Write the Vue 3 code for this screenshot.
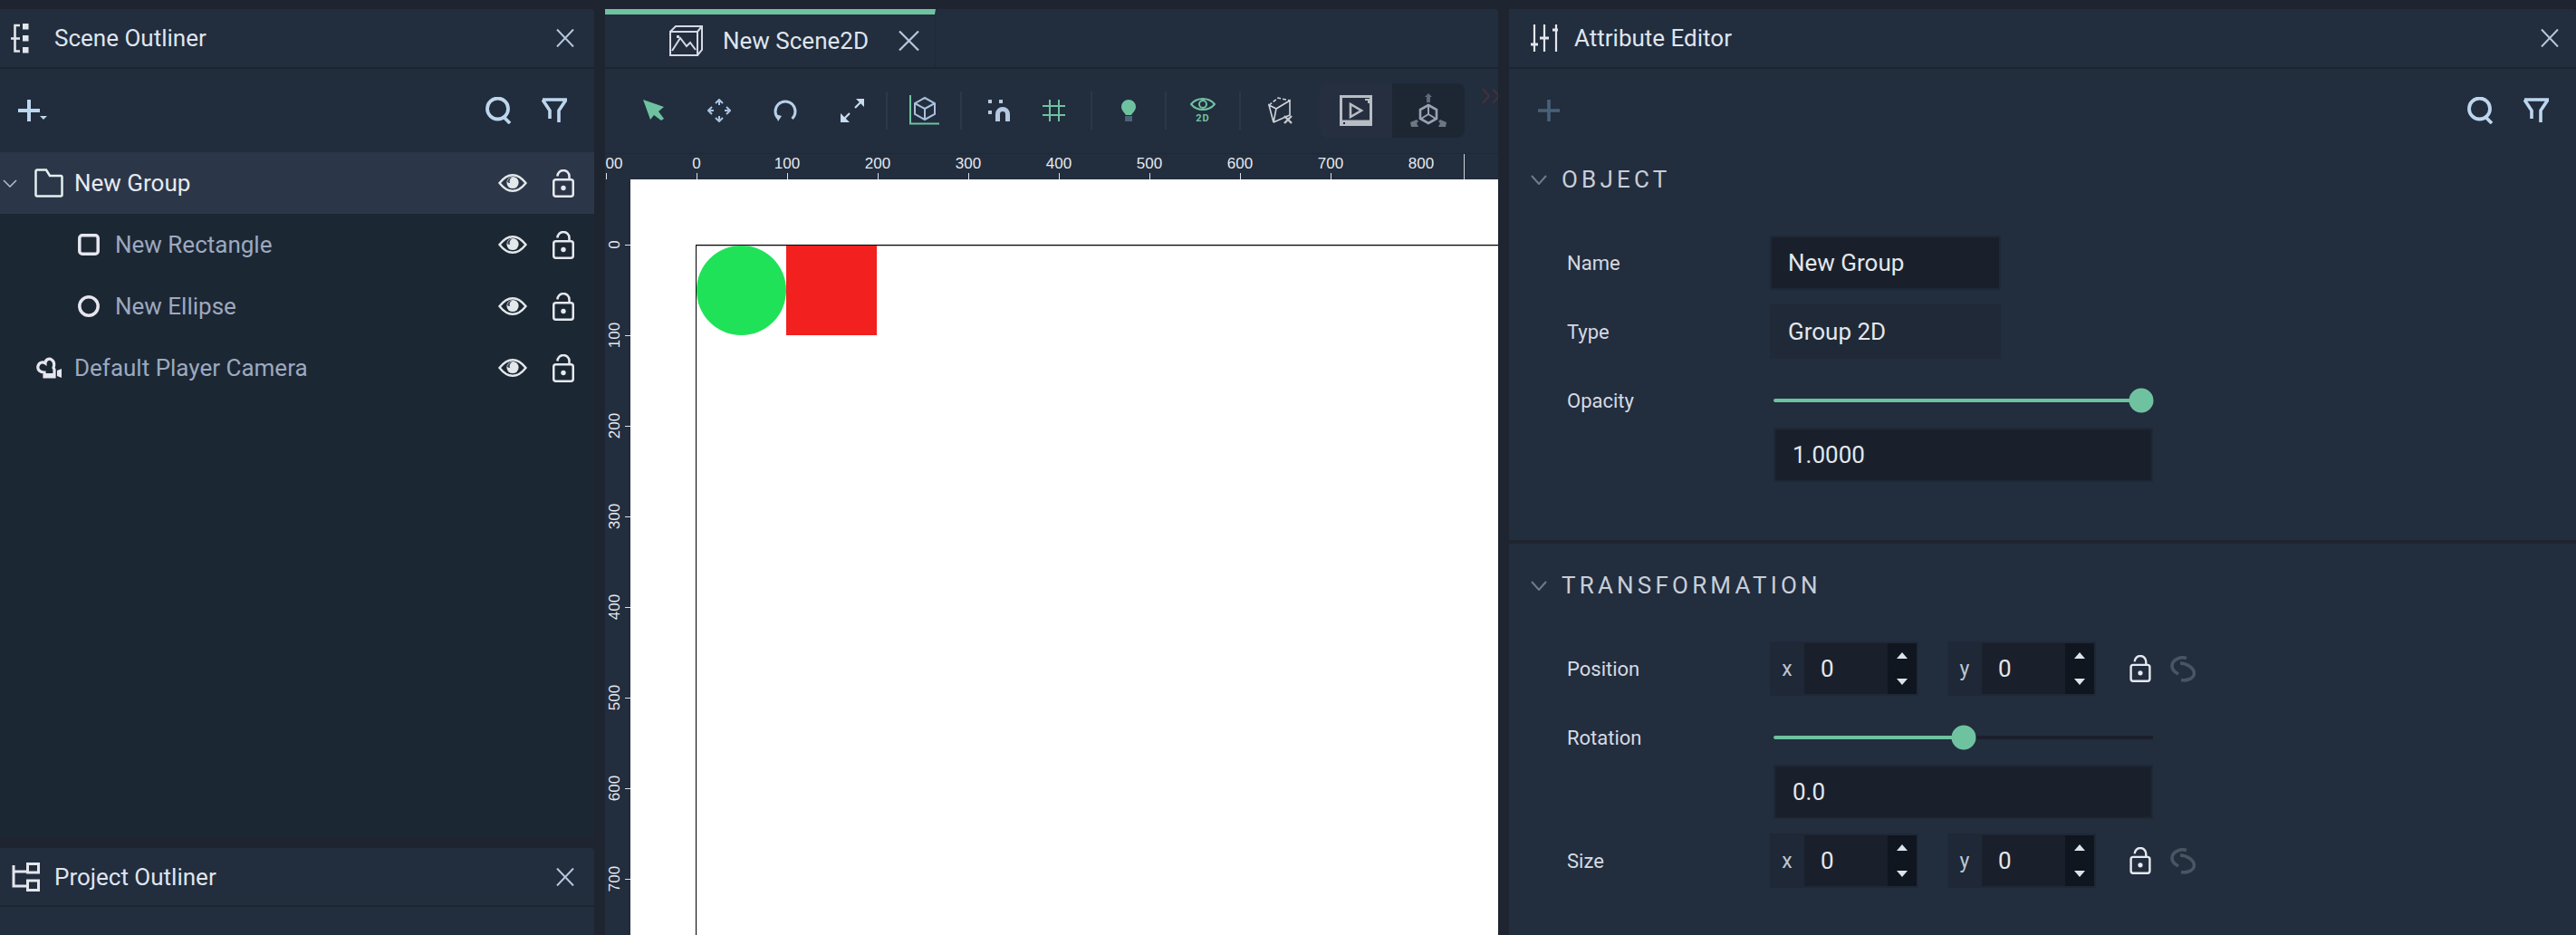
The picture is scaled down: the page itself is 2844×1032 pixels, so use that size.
<template>
  <svg class="defs" aria-hidden="true">
    <symbol id="i-close" viewBox="0 0 20 20">
      <path d="M1 0.5 L19 19.5 M19 0.5 L1 19.5" fill="none" stroke="currentColor" stroke-width="2" />
    </symbol>
    <symbol id="i-eye" viewBox="0 0 32 20">
      <path d="M1.5 10 C7 3 12 1.2 16 1.2 S25 3 30.5 10 C25 17 20 18.8 16 18.8 S7 17 1.5 10 Z" fill="none" stroke="currentColor" stroke-width="2.4" />
      <circle cx="16" cy="9.5" r="6.6" fill="currentColor" />
      <path d="M10 9 A6 6 0 0 1 16 3.4 A5 5 0 0 0 13 10 A6 6 0 0 1 10 9 Z" fill="#3a4658" />
    </symbol>
    <symbol id="i-lock" viewBox="0 0 24 31">
      <rect x="1.25" y="11.25" width="21.5" height="18.5" rx="2.5" fill="none" stroke="currentColor" stroke-width="2.5" />
      <path d="M5.5 7.5 A6.5 6.5 0 0 1 18.5 7.5 V11" fill="none" stroke="currentColor" stroke-width="2.5" />
      <circle cx="12" cy="20.5" r="2.7" fill="currentColor" />
    </symbol>
    <symbol id="i-search" viewBox="0 0 30 30">
      <circle cx="14.5" cy="13" r="11.5" fill="none" stroke="currentColor" stroke-width="3.8" />
      <path d="M21 22 L28 29" fill="none" stroke="currentColor" stroke-width="3.8" />
    </symbol>
    <symbol id="i-filter" viewBox="0 0 28 28">
      <path d="M1 2 H27 L19 14 V27 M1 2 L9 14 V23" fill="none" stroke="currentColor" stroke-width="3.6" />
    </symbol>
    <symbol id="i-link" viewBox="0 0 28 29">
      <path d="M18 2.5 C10 0 2 5 2 11 C2 15 5 18 9 20 M11 8 C18 8 26 13 26.5 19 C26.5 24 20 28 12 26.5" fill="none" stroke="currentColor" stroke-width="3.6" />
    </symbol>
    <symbol id="i-folder" viewBox="0 0 32 32">
      <path d="M1.5 3 A1.5 1.5 0 0 1 3 1.5 H13 L17 8 H29 A1.5 1.5 0 0 1 30.5 9.5 V29 A1.5 1.5 0 0 1 29 30.5 H3 A1.5 1.5 0 0 1 1.5 29 Z" fill="none" stroke="currentColor" stroke-width="2.5" />
    </symbol>
    <symbol id="i-rect" viewBox="0 0 24 24">
      <rect x="1.8" y="1.8" width="20.4" height="20.4" rx="3" fill="none" stroke="currentColor" stroke-width="3.5" />
    </symbol>
    <symbol id="i-ellipse" viewBox="0 0 24 24">
      <circle cx="12" cy="12" r="10.2" fill="none" stroke="currentColor" stroke-width="3.5" />
    </symbol>
    <symbol id="i-camera" viewBox="0 0 28 24">
      <path d="M9 22 V17 C4 17 1 14 2 10 C3 6 7 5 10 7 C10 3 14 1 17 3 C20 5 20 9 19 12 L20 14 V22 Z" fill="none" stroke="currentColor" stroke-width="3.2" />
      <path d="M9 18 H20 V23 H9 Z" fill="currentColor" />
      <path d="M23 15 L28 13 V23 L23 21 Z" fill="currentColor" />
    </symbol>
  </svg>

  <div class="app">
    <div class="column">
      <header class="panel-head">
        <svg class="icon-tree" width="20" height="33" viewBox="0 0 20 33">
          <path d="M10 2 H4.5 V30.5 H10 M0 16.5 H10" fill="none" stroke="currentColor" stroke-width="2.6" />
          <path d="M13 0 h6.5 v6.5 h-6.5z M13 13 h6.5 v6.5 h-6.5z M13 26 h6.5 v6.5 h-6.5z" fill="currentColor" />
        </svg>
        <span class="title">Scene Outliner</span>
        <svg class="close"><use href="#i-close" /></svg>
      </header>
      <section class="tree-panel">
        <div class="tools-row">
          <svg class="add-icon" width="32" height="24" viewBox="0 0 32 24">
            <path d="M12 0 V24 M0 12 H24" fill="none" stroke="currentColor" stroke-width="4" />
            <path d="M24 18 H32 L28 22 Z" fill="currentColor" />
          </svg>
          <svg class="tool-search"><use href="#i-search" /></svg>
          <svg class="tool-filter"><use href="#i-filter" /></svg>
        </div>
        <div class="tree">
          <div
            v-for="row in sceneRows"
            :key="row.name"
            class="tree-row"
            :class="{ active: row.active, child: row.child }"
          >
            <span class="caret-slot">
              <svg v-if="row.active" width="16" height="9" viewBox="0 0 16 9">
                <path d="M1 1 L8 8 L15 1" fill="none" stroke="#aeb8c6" stroke-width="1.6" />
              </svg>
            </span>
            <span class="type-slot">
              <svg class="type-icon" :class="'type-' + row.icon"><use :href="'#i-' + row.icon" /></svg>
            </span>
            <span class="row-name">{{ row.name }}</span>
            <svg class="eye"><use href="#i-eye" /></svg>
            <svg class="row-lock"><use href="#i-lock" /></svg>
          </div>
        </div>
      </section>
      <header class="panel-head project-head">
        <svg class="icon-project" width="31" height="32" viewBox="0 0 31 32">
          <path d="M2 3 V26 H16 M2 10 H16 M17.5 1.5 H29.5 V11 H17.5 Z M17.5 20 H29.5 V30.5 H17.5 Z" fill="none" stroke="currentColor" stroke-width="3" />
        </svg>
        <span class="title">Project Outliner</span>
        <svg class="close"><use href="#i-close" /></svg>
      </header>
      <section class="project-body"></section>
    </div>

    <div class="column">
      <div class="tab-bar">
        <div class="tab">
          <svg class="tab-icon" width="37" height="34" viewBox="0 0 37 34">
            <path d="M1 7 H31 V33 H1 Z M1 7 L7 1 H36 L31 7 M36 1 V27 L31 33 M3 28 L12 14 L19 23 L23 19 L29 27" fill="none" stroke="currentColor" stroke-width="2" />
            <rect x="8" y="11" width="3" height="3" fill="currentColor" />
          </svg>
          <span class="title">New Scene2D</span>
          <svg class="tab-close" width="23" height="22" viewBox="0 0 23 22">
            <path d="M1 0.5 L22 21.5 M22 0.5 L1 21.5" fill="none" stroke="currentColor" stroke-width="2.2" />
          </svg>
        </div>
      </div>
      <div class="toolbar">
        <div class="tool-group first">
          <svg width="23" height="23" viewBox="0 0 23 23">
            <path d="M0 0 L23 8 L17 13 L23 21 L20 23 L12 17 L8 22 Z" fill="#6fc2a0" />
          </svg>
          <svg width="26" height="26" viewBox="0 0 26 26">
            <path d="M9 5 L13 1 L17 5 M13 1 V7 M21 9 L25 13 L21 17 M25 13 H19 M9 21 L13 25 L17 21 M13 25 V19 M5 9 L1 13 L5 17 M1 13 H7" fill="none" stroke="#a9c3e0" stroke-width="2" />
          </svg>
          <svg width="26" height="24" viewBox="0 0 26 24">
            <path d="M5.5 21 A11 11 0 1 1 20.5 21" fill="none" stroke="#b8cfe8" stroke-width="3" />
            <path d="M2 16 L9 18 L5 24 Z" fill="#b8cfe8" />
          </svg>
          <svg width="26" height="26" viewBox="0 0 26 26">
            <path d="M17 0 H26 V9 Z M0 26 V16 L10 26 Z" fill="#c8dcf0" />
            <path d="M22 4 L16 10 M4 22 L10 16" fill="none" stroke="#c8dcf0" stroke-width="2.2" />
          </svg>
        </div>
        <div class="tool-group wide-82">
          <svg width="35" height="35" viewBox="0 0 35 35">
            <path d="M2 1 V32.5 H34" fill="none" stroke="#6fc2a0" stroke-width="2" />
            <path d="M18 4 L29 10 V22 L18 28 L7 22 V10 Z M7 10 L18 16 L29 10 M18 16 V28" fill="none" stroke="#a9c0dc" stroke-width="2" />
          </svg>
        </div>
        <div class="tool-group snap">
          <svg width="24" height="24" viewBox="0 0 24 24">
            <path d="M0 0 h4 v4 h-4z M12 0 h4 v4 h-4z M0 12 h4 v4 h-4z" fill="#b4c8e0" />
            <path d="M10.5 24 V16 A5.5 5.5 0 0 1 21.5 16 V24" fill="none" stroke="#b4c8e0" stroke-width="5" />
          </svg>
          <svg width="25" height="24" viewBox="0 0 25 24">
            <path d="M8 0 V24 M18 0 V24 M0 7 H25 M0 17 H25" fill="none" stroke="#6fc2a0" stroke-width="2" />
          </svg>
        </div>
        <div class="tool-group wide-82">
          <svg width="16" height="24" viewBox="0 0 16 24">
            <path d="M8 0 A8 8 0 0 1 16 8 C16 12 12 15 11 17 H5 C4 15 0 12 0 8 A8 8 0 0 1 8 0 Z" fill="#6fc2a0" />
            <rect x="4" y="18" width="8" height="6" fill="#4d6478" />
          </svg>
        </div>
        <div class="tool-group wide-82 eye-2d">
          <svg width="28" height="14" viewBox="0 0 28 14">
            <path d="M1 7 C6 1 11 1 14 1 S22 1 27 7 C22 13 17 13 14 13 S6 13 1 7 Z" fill="none" stroke="#6fc2a0" stroke-width="2" />
            <circle cx="14" cy="7" r="4" fill="none" stroke="#6fc2a0" stroke-width="2" />
          </svg>
          <span>2D</span>
        </div>
        <div class="tool-group cube-x">
          <svg width="27" height="30" viewBox="0 0 27 30">
            <path d="M1 9 L6 28 L9 13 Z M9 13 L24 4 V20 L6 28" fill="none" stroke="#d0d4da" stroke-width="1.6" />
            <path d="M1 9 L11 1 L24 4" fill="none" stroke="#d0d4da" stroke-width="1.6" stroke-dasharray="4 2" />
            <path d="M18 21 L26 29 M26 21 L18 29" fill="none" stroke="#c4c9d0" stroke-width="2.4" />
          </svg>
        </div>
        <div class="view-switch">
          <div class="view-cell">
            <svg width="36" height="34" viewBox="0 0 36 34">
              <path d="M1.5 1.5 H34.5 V29 H1.5 Z" fill="none" stroke="#b8bcc4" stroke-width="3" />
              <rect x="0" y="28" width="36" height="6" fill="#b8bcc4" />
              <rect x="4" y="30" width="2" height="2" fill="#1d2734" />
              <path d="M12 10 V24 L24 17 Z" fill="none" stroke="#b8bcc4" stroke-width="2.6" />
              <path d="M28 4 H33 V9 H31 V6 H28 Z" fill="#b8bcc4" />
            </svg>
          </div>
          <div class="view-cell dark">
            <svg width="40" height="38" viewBox="0 0 40 38">
              <path d="M20 23 L20 14 M20 23 L12 28 M20 23 L28 28" fill="none" stroke="#98a2b2" stroke-width="2" />
              <path d="M20 13 L29 18 V28 L20 33 L11 28 V18 Z" fill="none" stroke="#98a2b2" stroke-width="2.6" />
              <path d="M16 4 L20 0 L24 4 H22 V10 H18 V4 Z" fill="#5e6a7a" />
              <path d="M0 32 L7 29 L9 31 L7 33 L9 37 H1 Z M40 32 L33 29 L31 31 L33 33 L31 37 H39 Z" fill="#6d7682" />
            </svg>
          </div>
        </div>
        <svg class="more" width="24" height="16" viewBox="0 0 24 16">
          <path d="M1 0 L8 8 L1 16 M12 0 L19 8 L12 16" fill="none" stroke="#43303a" stroke-width="2.4" />
        </svg>
      </div>
      <div class="ruler-top">
        <span class="mark-label mark-clipped">00</span>
        <i class="mark-tick" style="left: 1px"></i>
        <template v-for="mark in topMarks" :key="mark.value">
          <span class="mark-label" :style="{ left: mark.pos + 'px' }">{{ mark.value }}</span>
          <i v-if="mark.value !== 800" class="mark-tick" :style="{ left: mark.pos + 'px' }"></i>
        </template>
        <i class="ruler-end"></i>
      </div>
      <div class="viewport">
        <div class="ruler-left">
          <template v-for="mark in leftMarks" :key="mark.value">
            <span class="mark-label-v" :style="{ top: mark.pos + 'px' }">{{ mark.value }}</span>
            <i class="mark-tick-v" :style="{ top: mark.pos + 'px' }"></i>
          </template>
        </div>
        <div class="canvas">
          <div class="scene-frame">
            <div class="shape-ellipse"></div>
            <div class="shape-rect"></div>
          </div>
        </div>
      </div>
    </div>

    <div class="column">
      <header class="panel-head attr-head">
        <svg width="30" height="30" viewBox="0 0 30 30">
          <path d="M4 0 V30 M15 0 V30 M28 0 V30" fill="none" stroke="currentColor" stroke-width="2.2" />
          <path d="M0 22 H8 M10 15 H20 M24 6 H30" fill="none" stroke="currentColor" stroke-width="3" />
        </svg>
        <span class="title title-attr">Attribute Editor</span>
        <svg class="close"><use href="#i-close" /></svg>
      </header>
      <section class="attr-body">
        <div class="tools-row attr-tools">
          <svg width="24" height="24" viewBox="0 0 24 24">
            <path d="M12 0 V24 M0 12 H24" fill="none" stroke="#4a6178" stroke-width="3.6" />
          </svg>
          <svg class="tool-search"><use href="#i-search" /></svg>
          <svg class="tool-filter"><use href="#i-filter" /></svg>
        </div>

        <div class="section section-object">
          <div class="section-head">
            <svg width="18" height="11" viewBox="0 0 18 11">
              <path d="M1 1 L9 10 L17 1" fill="none" stroke="#6f7b8c" stroke-width="2" />
            </svg>
            <span>OBJECT</span>
          </div>
          <div class="field-row">
            <span class="field-label">Name</span>
            <div class="text-field">New Group</div>
          </div>
          <div class="field-row">
            <span class="field-label">Type</span>
            <div class="text-field readonly">Group 2D</div>
          </div>
          <div class="field-row flush">
            <span class="field-label">Opacity</span>
            <div class="slider">
              <div class="slider-fill" :style="{ width: knobPos(1) + 'px' }"></div>
              <div class="slider-knob" :style="{ left: knobPos(1) + 'px' }"></div>
            </div>
          </div>
          <div class="wide-field">1.0000</div>
        </div>

        <div class="section section-transform">
          <div class="section-head">
            <svg width="18" height="11" viewBox="0 0 18 11">
              <path d="M1 1 L9 10 L17 1" fill="none" stroke="#6f7b8c" stroke-width="2" />
            </svg>
            <span>TRANSFORMATION</span>
          </div>
          <div class="field-row">
            <span class="field-label">Position</span>
            <div v-for="axis in axes" :key="axis" class="spin-field">
              <span class="axis">{{ axis }}</span>
              <span class="spin-value">0</span>
              <span class="spin-arrows"><i class="up"></i><i class="down"></i></span>
            </div>
            <svg class="field-lock"><use href="#i-lock" /></svg>
            <svg class="field-link"><use href="#i-link" /></svg>
          </div>
          <div class="field-row flush">
            <span class="field-label">Rotation</span>
            <div class="slider">
              <div class="slider-fill" :style="{ width: knobPos(0.5) + 'px' }"></div>
              <div class="slider-knob" :style="{ left: knobPos(0.5) + 'px' }"></div>
            </div>
          </div>
          <div class="wide-field spaced">0.0</div>
          <div class="field-row">
            <span class="field-label">Size</span>
            <div v-for="axis in axes" :key="axis" class="spin-field">
              <span class="axis">{{ axis }}</span>
              <span class="spin-value">0</span>
              <span class="spin-arrows"><i class="up"></i><i class="down"></i></span>
            </div>
            <svg class="field-lock"><use href="#i-lock" /></svg>
            <svg class="field-link"><use href="#i-link" /></svg>
          </div>
        </div>
      </section>
    </div>
  </div>
</template>

<script setup>
const sceneRows = [
  { name: "New Group", icon: "folder", active: true },
  { name: "New Rectangle", icon: "rect", child: true },
  { name: "New Ellipse", icon: "ellipse", child: true },
  { name: "Default Player Camera", icon: "camera" },
];

const axes = ["x", "y"];

// ruler marks, px from the left / top edge of each ruler
const topMarks = [0, 100, 200, 300, 400, 500, 600, 700, 800].map((value) => ({
  value,
  pos: 101 + value,
}));
const leftMarks = [0, 100, 200, 300, 400, 500, 600, 700].map((value) => ({
  value,
  pos: 72 + value,
}));

function knobPos(ratio) {
  return 13 + ratio * 393;
}
</script>

<style>
html,
body {
  margin: 0;
  background: #1e2530;
}
</style>

<style scoped>
.defs {
  position: absolute;
  width: 0;
  height: 0;
}

.app {
  box-sizing: border-box;
  width: 2844px;
  height: 1032px;
  padding-top: 10px;
  display: grid;
  grid-template-columns: 656px 986px 1178px;
  column-gap: 12px;
  overflow: hidden;
  background: #1e2530;
  font-family: Roboto, "Liberation Sans", sans-serif;
  color: #e2e6ec;
}

.column {
  display: flex;
  flex-direction: column;
  min-width: 0;
  height: 1022px;
}

.panel-head {
  flex: none;
  display: flex;
  align-items: center;
  height: 64px;
  background: #222d3e;
  border-radius: 0 4px 0 0;
  color: #e4e6ec;
}

.icon-tree {
  margin-left: 12px;
}

.title {
  font-size: 26px;
  color: #dfe5ee;
  white-space: nowrap;
}

.panel-head .icon-tree + .title {
  margin-left: 28px;
}

.close {
  width: 20px;
  height: 20px;
  margin-left: auto;
  margin-right: 22px;
  color: #b5c7dc;
}

.tree-panel {
  flex: none;
  height: 848px;
  margin-top: 2px;
  background: #1c2734;
}

.tools-row {
  display: flex;
  align-items: center;
  height: 92px;
  padding: 0 28px 0 20px;
  background: #212c3c;
  color: #bcd6ee;
}

.tool-search {
  width: 30px;
  height: 30px;
  margin-left: auto;
}

.tool-filter {
  width: 28px;
  height: 28px;
  margin-left: 33px;
  margin-right: 2px;
}

.tree-row {
  display: flex;
  align-items: center;
  height: 68px;
  font-size: 26px;
  color: #9ca9bf;
}

.tree-row.active {
  background: #2c3649;
  color: #e6eaf0;
}

.caret-slot {
  flex: none;
  width: 38px;
  padding-left: 3px;
  box-sizing: border-box;
  display: flex;
  align-items: center;
}

.tree-row.child .caret-slot {
  width: 86px;
}

.type-slot {
  flex: none;
  width: 44px;
  display: flex;
}

.tree-row.child .type-slot {
  width: 41px;
}

.type-icon {
  color: #e6e6ee;
}

.type-folder {
  width: 32px;
  height: 32px;
  color: #e3f0ef;
}

.type-rect,
.type-ellipse {
  width: 24px;
  height: 24px;
}

.type-camera {
  width: 28px;
  height: 24px;
  margin-left: 2px;
}

.row-name {
  flex: 1;
  white-space: nowrap;
}

.eye {
  width: 32px;
  height: 20px;
  margin-right: 28px;
  color: #e3e8ea;
}

.row-lock {
  width: 24px;
  height: 31px;
  margin-right: 22px;
  color: #e6e9ee;
}

.project-head {
  margin-top: 12px;
  height: 63px;
}

.icon-project {
  margin-left: 13px;
  margin-right: 16px;
}

.project-body {
  flex: 1;
  margin-top: 2px;
  background: #222d3e;
}

.tab-bar {
  flex: none;
  height: 64px;
  background: #222d3e;
  border-radius: 0 4px 0 0;
}

.tab {
  box-sizing: border-box;
  display: flex;
  align-items: center;
  width: 365px;
  height: 64px;
  padding-left: 71px;
  border-top: 6px solid #6fc2a0;
  border-right: 1px solid #1e2836;
  color: #d4d9e3;
}

.tab-icon {
  margin-right: 22px;
}

.tab-close {
  margin-left: 33px;
  color: #b5c7dc;
}

.toolbar {
  flex: none;
  box-sizing: border-box;
  display: flex;
  align-items: center;
  height: 94px;
  margin-top: 2px;
  padding-bottom: 2px;
  overflow: hidden;
  background: #222d3e;
  border-bottom: 1px solid #1e2836;
}

.tool-group {
  flex: none;
  box-sizing: border-box;
  display: flex;
  align-items: center;
  justify-content: center;
  height: 42px;
  border-right: 2px solid #2c3749;
}

.tool-group.first {
  width: 312px;
  padding-left: 42px;
  justify-content: flex-start;
  gap: 47.5px;
}

.wide-82 {
  width: 82px;
}

.tool-group.snap {
  width: 144px;
  gap: 36px;
}

.eye-2d {
  flex-direction: column;
  gap: 3px;
  color: #6fc2a0;
  font-size: 11px;
  font-weight: 700;
  line-height: 11px;
  letter-spacing: 1px;
}

.tool-group.cube-x {
  width: 87px;
  border-right: 0;
}

.view-switch {
  flex: none;
  display: flex;
  height: 60px;
  border-radius: 8px;
  overflow: hidden;
}

.view-cell {
  display: flex;
  align-items: center;
  justify-content: center;
  width: 80px;
  background: #252f3f;
}

.view-cell.dark {
  background: #1d2734;
}

.more {
  flex: none;
  align-self: flex-start;
  margin: 22px 0 0 19px;
}

.ruler-top {
  flex: none;
  position: relative;
  height: 28px;
  overflow: hidden;
  background: #222d3e;
}

.mark-label {
  position: absolute;
  top: 1px;
  transform: translateX(-50%);
  font-family: "Liberation Sans", Arial, sans-serif;
  font-size: 17px;
  line-height: 19px;
  color: #e6e9ee;
}

.mark-clipped {
  left: 10px;
}

.mark-tick {
  position: absolute;
  top: 21px;
  width: 1px;
  height: 7px;
  background: #dfe3e8;
}

.ruler-end {
  position: absolute;
  left: 948px;
  top: 0;
  width: 1px;
  height: 28px;
  background: #cfd4da;
}

.viewport {
  flex: 1;
  display: flex;
  min-height: 0;
}

.ruler-left {
  flex: none;
  position: relative;
  width: 28px;
  overflow: hidden;
  background: #222d3e;
}

.mark-label-v {
  position: absolute;
  left: 10px;
  transform: translate(-50%, -50%) rotate(-90deg);
  font-family: "Liberation Sans", Arial, sans-serif;
  font-size: 17px;
  line-height: 19px;
  color: #e6e9ee;
}

.mark-tick-v {
  position: absolute;
  left: 22px;
  width: 6px;
  height: 1px;
  background: #dfe3e8;
}

.canvas {
  flex: 1;
  position: relative;
  overflow: hidden;
  background: #fff;
}

.scene-frame {
  position: absolute;
  left: 72px;
  top: 72px;
  right: -20px;
  bottom: -20px;
  border-left: 1px solid #000;
  border-top: 1px solid #000;
  box-shadow: inset 0 1px 0 #bdbdbd;
}

.shape-ellipse {
  position: absolute;
  left: 0;
  top: 0;
  width: 99px;
  height: 99px;
  border-radius: 50%;
  background: #20e258;
}

.shape-rect {
  position: absolute;
  left: 99px;
  top: 0;
  width: 100px;
  height: 99px;
  background: #f2201f;
}

.attr-head svg:first-child {
  margin-left: 24px;
}

.title-attr {
  margin-left: 18px;
}

.attr-head .close {
  margin-right: 19px;
}

.attr-body {
  flex: 1;
  margin-top: 2px;
  background: #222d3e;
}

.attr-tools {
  padding-left: 32px;
  background: none;
}

.section-object {
  padding-bottom: 64px;
}

.section-transform {
  border-top: 4px solid #1e2530;
  padding-top: 16px;
}

.section-head {
  display: flex;
  align-items: center;
  height: 60px;
  margin-bottom: 32px;
  padding-left: 24px;
  font-size: 26px;
  letter-spacing: 4.2px;
  color: #c8ced8;
}

.section-head span {
  margin-left: 16px;
}

.field-row {
  display: flex;
  align-items: center;
  height: 60px;
  margin-bottom: 16px;
  padding-left: 64px;
}

.field-row.flush {
  margin-bottom: 0;
}

.field-label {
  flex: none;
  width: 224px;
  font-size: 22px;
  color: #d5dae2;
}

.text-field,
.wide-field {
  box-sizing: border-box;
  display: flex;
  align-items: center;
  height: 60px;
  border: 2px solid #1e2836;
  background: #19202b;
  font-size: 26px;
  color: #e4e7ec;
}

.text-field {
  width: 255px;
  padding-left: 18px;
}

.text-field.readonly {
  background: #1f2937;
  border-color: #1f2937;
}

.wide-field {
  width: 419px;
  margin-left: 292px;
  padding-left: 19px;
}

.wide-field.spaced {
  margin-bottom: 16px;
}

.slider {
  position: relative;
  width: 419px;
  height: 4px;
  margin-left: 4px;
  background: #19202b;
}

.slider-fill {
  height: 100%;
  border-radius: 2px;
  background: #6fc2a0;
}

.slider-knob {
  position: absolute;
  top: 50%;
  width: 27px;
  height: 27px;
  border-radius: 50%;
  background: #6fc2a0;
  transform: translate(-50%, -50%);
}

.spin-field {
  box-sizing: border-box;
  display: flex;
  width: 164px;
  height: 60px;
  border: 2px solid #1e2836;
  background: #1e2836;
}

.spin-field + .spin-field {
  margin-left: 32px;
}

.axis {
  flex: none;
  box-sizing: border-box;
  width: 36px;
  padding-right: 2px;
  align-self: center;
  text-align: center;
  font-size: 23px;
  color: #bcc6d4;
}

.spin-value {
  flex: 1;
  display: flex;
  align-items: center;
  padding-left: 18px;
  background: #19202b;
  font-size: 26px;
  color: #e4e7ec;
}

.spin-arrows {
  flex: none;
  box-sizing: border-box;
  width: 32px;
  padding: 10px 0;
  display: flex;
  flex-direction: column;
  align-items: center;
  justify-content: space-between;
  background: #10161f;
}

.spin-arrows i {
  display: block;
  width: 0;
  height: 0;
  border-left: 6px solid transparent;
  border-right: 6px solid transparent;
}

.spin-arrows .up {
  border-bottom: 7px solid #dfe3e8;
}

.spin-arrows .down {
  border-top: 7px solid #dfe3e8;
}

.field-lock {
  width: 24px;
  height: 30px;
  margin-left: 37px;
  color: #e6e9ee;
}

.field-link {
  width: 28px;
  height: 29px;
  margin-left: 21px;
  color: #4a5462;
}
</style>
